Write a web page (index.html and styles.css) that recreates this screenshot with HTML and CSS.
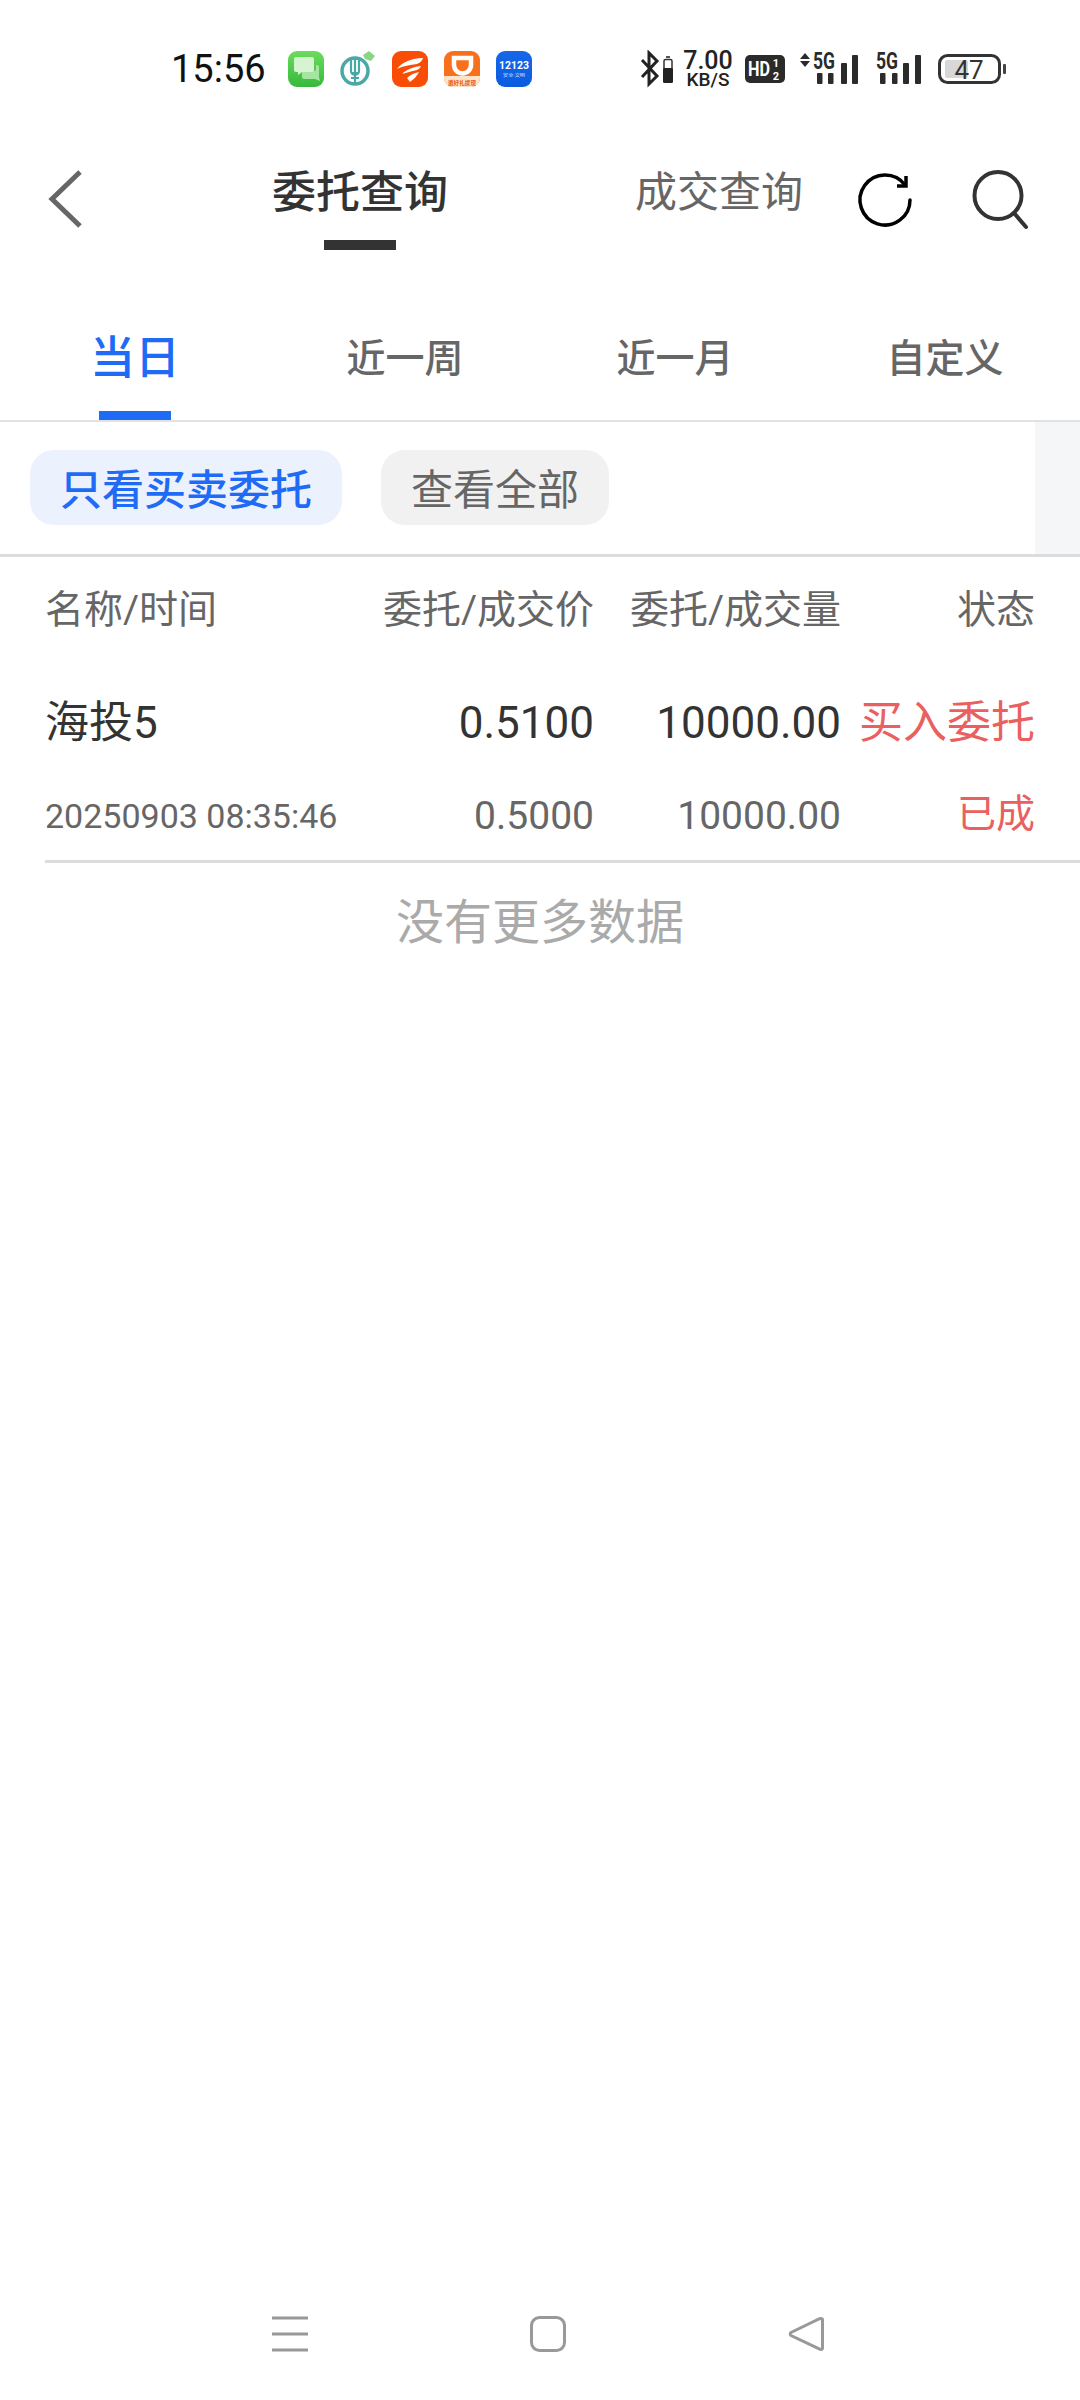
FILE: index.html
```html
<!DOCTYPE html>
<html lang="zh-CN">
<head>
    <meta charset="UTF-8">
    <meta name="viewport" content="width=device-width, initial-scale=1.0">
    <title>委托查询</title>
    <link rel="stylesheet" href="styles.css">
</head>
<body>
    <div class="status-bar">
        <span class="clock">15:56</span>
        <div class="app-icons">
            <svg class="app-icon" viewBox="0 0 36 36">
                <defs>
                    <linearGradient id="msg-bg" x1="0" y1="0" x2="0" y2="1">
                        <stop offset="0" stop-color="#6bdc5e"/>
                        <stop offset="1" stop-color="#37b83c"/>
                    </linearGradient>
                </defs>
                <rect width="36" height="36" rx="9" fill="url(#msg-bg)"/>
                <path d="M14 20h12a2 2 0 0 0 2-2v-4h1a2 2 0 0 1 2 2v10l1 4-5-2H16a2 2 0 0 1-2-2z" fill="#a4e5a0"/>
                <path d="M8 6h16a2 2 0 0 1 2 2v11a2 2 0 0 1-2 2H14l-4 3v-3H8a2 2 0 0 1-2-2V8a2 2 0 0 1 2-2z" fill="#d5f4d0"/>
            </svg>
            <svg class="app-icon" viewBox="0 0 36 36">
                <circle cx="15" cy="20" r="13" fill="none" stroke="#4aa9a5" stroke-width="3.500"/>
                <path d="M11 7v13a4 4 0 0 0 8 0V7M15 6v28M11 22h8M11 27h8" fill="none" stroke="#4aa9a5" stroke-width="2.200"/>
                <path d="M23 4l6-4 6 5-4 5-6-2z" fill="#8ad685"/>
            </svg>
            <svg class="app-icon" viewBox="0 0 36 36">
                <rect width="36" height="36" rx="9" fill="#f94c05"/>
                <path d="M5 18C10 11 20 7 31 7c-1 3-3 5-6 6-7 1-14 2-20 5z" fill="#fff"/>
                <path d="M10 23c4-4 10-7 19-8-1 2-2 3-4 4-6 1-10 3-15 4z" fill="#fff"/>
                <path d="M15 27c3-3 7-5 12-6-2 4-5 7-9 10-1-1-2-3-3-4z" fill="#fff"/>
            </svg>
            <svg class="app-icon" viewBox="0 0 36 36">
                <rect width="36" height="36" rx="9" fill="#f9701c"/>
                <path d="M0 25h36v2a9 9 0 0 1-9 9H9a9 9 0 0 1-9-9z" fill="#fde3c8"/>
                <path d="M10 7h17v7a8.500 8.500 0 0 1-17 0z" fill="none" stroke="#fff" stroke-width="4.500"/>
                <text class="didi-text" x="18" y="33.500" text-anchor="middle" textLength="28" lengthAdjust="spacingAndGlyphs">邀好礼提现</text>
            </svg>
            <svg class="app-icon" viewBox="0 0 36 36">
                <defs>
                    <linearGradient id="traffic-bg" x1="0" y1="0" x2="0" y2="1">
                        <stop offset="0" stop-color="#1668e8"/>
                        <stop offset="1" stop-color="#0a5be0"/>
                    </linearGradient>
                </defs>
                <rect width="36" height="36" rx="9" fill="url(#traffic-bg)"/>
                <text class="traffic-num" x="18" y="18" text-anchor="middle" textLength="30" lengthAdjust="spacingAndGlyphs">12123</text>
                <text class="traffic-sub" x="18" y="26" text-anchor="middle" textLength="22" lengthAdjust="spacingAndGlyphs">安全·文明</text>
            </svg>
        </div>
        <div class="sys-icons">
            <svg class="sys-bt" viewBox="0 0 38 38">
                <path d="M4 10L19 26L11 34V3L19 11L4 27" fill="none" stroke="#222" stroke-width="3"/>
                <rect x="28" y="6" width="4" height="2" fill="#555"/>
                <rect x="26" y="9.500" width="8" height="22" rx="1.500" fill="none" stroke="#333" stroke-width="1.500"/>
                <rect x="25" y="18" width="10" height="15" rx="1.500" fill="#222"/>
            </svg>
            <div class="net-speed">
                <span class="net-value">7.00</span>
                <span class="net-unit">KB/S</span>
            </div>
            <svg class="sys-hd" viewBox="0 0 40 28">
                <rect width="40" height="28" rx="5" fill="#2b2b2b"/>
                <text class="hd-text" x="3" y="21" textLength="22" lengthAdjust="spacingAndGlyphs">HD</text>
                <text class="hd-small" x="31" y="12" text-anchor="middle">1</text>
                <text class="hd-small" x="31" y="25" text-anchor="middle">2</text>
            </svg>
            <svg class="sys-sig-a" viewBox="0 0 62 36">
                <path d="M2 8L7 2L12 8zM2 10L7 16L12 10z" fill="#2b2b2b"/>
                <text class="sig-text" x="15" y="18" textLength="22" lengthAdjust="spacingAndGlyphs">5G</text>
                <rect x="19" y="22" width="5.500" height="11" rx="1" fill="#2b2b2b"/>
                <rect x="30" y="22" width="5.500" height="11" rx="1" fill="#2b2b2b"/>
                <rect x="43" y="12" width="6" height="21" rx="1" fill="#2b2b2b"/>
                <rect x="54" y="4" width="6" height="29" rx="1" fill="#2b2b2b"/>
            </svg>
            <svg class="sys-sig-b" viewBox="0 0 48 36">
                <text class="sig-text" x="2" y="18" textLength="22" lengthAdjust="spacingAndGlyphs">5G</text>
                <rect x="6" y="22" width="5.500" height="11" rx="1" fill="#2b2b2b"/>
                <rect x="18" y="22" width="5.500" height="11" rx="1" fill="#2b2b2b"/>
                <rect x="29" y="12" width="6" height="21" rx="1" fill="#2b2b2b"/>
                <rect x="41" y="4" width="6" height="29" rx="1" fill="#2b2b2b"/>
            </svg>
            <svg class="sys-battery" viewBox="0 0 69 34">
                <rect x="1.500" y="3.500" width="60" height="27" rx="8" fill="#fff" stroke="#333" stroke-width="3"/>
                <rect x="7" y="8" width="23" height="18" rx="2" fill="#d8d8d8"/>
                <text class="battery-text" x="31" y="27" text-anchor="middle">47</text>
                <rect x="65" y="12" width="3" height="10" rx="1" fill="#444"/>
            </svg>
        </div>
    </div>

    <div class="nav">
        <svg class="nav-back" viewBox="0 0 40 66">
            <path d="M34 6L6 33L34 60" fill="none" stroke="#666" stroke-width="5"/>
        </svg>
        <div class="nav-tab">
            <span class="nav-title">委托查询</span>
            <span class="nav-mark"></span>
        </div>
        <span class="nav-other">成交查询</span>
        <svg class="nav-refresh" viewBox="0 0 60 60">
            <path d="M55 30A25 25 0 1 1 50 15" fill="none" stroke="#000" stroke-width="3.500" stroke-linecap="round"/>
            <path d="M42 16H51V6" fill="none" stroke="#000" stroke-width="3.500"/>
        </svg>
        <svg class="nav-search" viewBox="0 0 60 62">
            <circle cx="28" cy="27.500" r="23.500" fill="none" stroke="#333" stroke-width="4"/>
            <path d="M44 45L56 59" fill="none" stroke="#333" stroke-width="4" stroke-linecap="round"/>
        </svg>
    </div>

    <div class="period-tabs">
        <div class="period active"><span>当日</span><i></i></div>
        <div class="period"><span>近一周</span><i></i></div>
        <div class="period"><span>近一月</span><i></i></div>
        <div class="period"><span>自定义</span><i></i></div>
    </div>

    <div class="filter-row">
        <div class="chips">
            <span class="chip chip-on">只看买卖委托</span>
            <span class="chip">查看全部</span>
        </div>
        <div class="filter-side"></div>
    </div>

    <div class="table-head">
        <span>名称/时间</span>
        <span class="num">委托/成交价</span>
        <span class="num">委托/成交量</span>
        <span class="num">状态</span>
    </div>

    <div class="order">
        <span class="order-name">海投5</span>
        <span class="order-main num">0.5100</span>
        <span class="order-main num">10000.00</span>
        <span class="order-state num">买入委托</span>
        <span class="order-time">20250903 08:35:46</span>
        <span class="order-sub num">0.5000</span>
        <span class="order-sub num">10000.00</span>
        <span class="order-done num">已成</span>
    </div>

    <div class="no-more">没有更多数据</div>

    <div class="sys-nav">
        <svg viewBox="0 0 36 36">
            <path d="M0 2H36M0 18H36M0 34H36" fill="none" stroke="#999" stroke-width="3"/>
        </svg>
        <svg viewBox="0 0 36 36">
            <rect x="1.500" y="1.500" width="33" height="33" rx="8" fill="none" stroke="#999" stroke-width="3"/>
        </svg>
        <svg viewBox="0 0 36 36">
            <path d="M33 2.500a1.500 1.500 0 0 1 1.500 1.500v28a1.500 1.500 0 0 1-2.300 1.300L3 19.500a1.800 1.800 0 0 1 0-3L31.500 2.700z" fill="none" stroke="#999" stroke-width="3"/>
        </svg>
    </div>
</body>
</html>
```

FILE: styles.css
```css
* {
    box-sizing: border-box;
}

body {
    margin: 0;
    width: 1080px;
    height: 2400px;
    display: flex;
    flex-direction: column;
    background-color: #fff;
    font-family: Roboto, "Noto Sans CJK SC", sans-serif;
    color: #333;
}

svg {
    display: block;
    flex-shrink: 0;
}

/* status bar */
.status-bar {
    display: flex;
    align-items: center;
    height: 138px;
    padding-left: 171px;
}

.clock {
    width: 117px;
    font-size: 38px;
    color: #111;
}

.app-icons {
    display: flex;
    align-items: center;
    gap: 16px;
}

.app-icon {
    width: 36px;
    height: 36px;
}

.didi-text {
    font-size: 6px;
    font-weight: 700;
    fill: #e8591a;
}

.traffic-num {
    font-size: 11px;
    font-weight: 700;
    fill: #fff;
}

.traffic-sub {
    font-size: 4px;
    fill: #dbe8ff;
}

.sys-icons {
    display: flex;
    align-items: center;
    margin-left: 106px;
}

.sys-bt {
    width: 38px;
    height: 38px;
}

.net-speed {
    display: flex;
    flex-direction: column;
    align-items: center;
    width: 52px;
    margin-left: 6px;
    color: #222;
}

.net-value {
    font-size: 25px;
    font-weight: 500;
    line-height: 20px;
}

.net-unit {
    font-size: 19px;
    font-weight: 500;
    line-height: 17px;
}

.sys-hd {
    width: 40px;
    height: 28px;
    margin-left: 11px;
}

.hd-text {
    font-size: 21px;
    font-weight: 700;
    fill: #fff;
}

.hd-small {
    font-size: 11px;
    font-weight: 700;
    fill: #fff;
}

.sys-sig-a {
    width: 62px;
    height: 36px;
    margin-left: 13px;
    overflow: visible;
}

.sys-sig-b {
    width: 48px;
    height: 36px;
    margin-left: 14px;
    overflow: visible;
}

.sig-text {
    font-size: 23px;
    font-weight: 700;
    fill: #2b2b2b;
}

.sys-battery {
    width: 69px;
    height: 34px;
    margin-left: 16px;
}

.battery-text {
    font-size: 26px;
    fill: #333;
}

/* top navigation */
.nav {
    display: flex;
    align-items: flex-start;
    height: 112px;
    padding: 25px 0 0 46px;
}

.nav-back {
    width: 40px;
    height: 66px;
    margin-top: 3px;
}

.nav-tab {
    display: flex;
    flex-direction: column;
    align-items: center;
    width: 176px;
    margin-left: 186px;
}

.nav-title {
    font-size: 44px;
    font-weight: 500;
    line-height: 60px;
    color: #333;
}

.nav-mark {
    width: 72px;
    height: 10px;
    margin-top: 17px;
    background-color: #333;
}

.nav-other {
    width: 168px;
    margin-left: 187px;
    font-size: 42px;
    line-height: 60px;
    color: #666;
}

.nav-refresh {
    width: 60px;
    height: 60px;
    margin: 7px 0 0 52px;
}

.nav-search {
    width: 60px;
    height: 62px;
    margin: 5px 0 0 55px;
}

/* period tabs */
.period-tabs {
    display: grid;
    grid-template-columns: repeat(4, 270px);
    height: 172px;
    border-bottom: 2px solid #e2e2e2;
}

.period {
    display: flex;
    flex-direction: column;
    align-items: center;
    justify-content: flex-end;
    font-size: 39px;
    font-weight: 500;
    color: #666;
}

.period span {
    line-height: 56px;
}

.period i {
    width: 72px;
    height: 9px;
    margin-top: 24px;
}

.period.active {
    font-size: 45px;
    color: #1f6bf5;
}

.period.active i {
    background-color: #1f6bf5;
}

/* filter chips */
.filter-row {
    display: flex;
    justify-content: space-between;
    height: 135px;
    padding-left: 30px;
    border-bottom: 3px solid #dcdcdc;
}

.chips {
    display: flex;
    align-items: flex-start;
    gap: 39px;
    padding-top: 28px;
}

.chip {
    height: 75px;
    padding: 6px 30px 0;
    border-radius: 24px;
    font-size: 42px;
    line-height: 69px;
    color: #666;
    background-color: #f1f1f1;
}

.chip-on {
    font-weight: 500;
    color: #1f6bf5;
    background-color: #ebf2fd;
}

.filter-side {
    width: 45px;
    background-color: #f5f6f8;
}

/* order table */
.table-head,
.order {
    display: grid;
    grid-template-columns: 330px 219px 247px 194px;
    margin-left: 45px;
    padding-right: 45px;
}

.table-head {
    align-items: center;
    height: 104px;
    padding-bottom: 6px;
    font-size: 39px;
    color: #666;
}

.table-head span:first-child {
    white-space: nowrap;
}

.num {
    text-align: right;
    white-space: nowrap;
}

.order {
    grid-template-rows: 62px 62px;
    row-gap: 31px;
    height: 202px;
    padding-top: 31px;
    border-bottom: 3px solid #dcdcdc;
    align-items: center;
}

.order-name {
    padding-bottom: 8px;
    font-size: 44px;
    color: #333;
}

.order-main {
    font-size: 44px;
    color: #333;
}

.order-state {
    padding-bottom: 8px;
    font-size: 44px;
    color: #ea6060;
}

.order-time {
    font-size: 34px;
    color: #666;
    white-space: nowrap;
}

.order-sub {
    font-size: 39px;
    color: #666;
}

.order-done {
    padding-bottom: 12px;
    font-size: 39px;
    color: #ea6060;
}

.no-more {
    margin-top: 30px;
    font-size: 48px;
    line-height: 60px;
    text-align: center;
    color: #aaa;
}

/* system navigation bar */
.sys-nav {
    display: flex;
    align-items: center;
    justify-content: center;
    gap: 222px;
    height: 132px;
    margin-top: auto;
    padding-left: 16px;
}

.sys-nav svg {
    width: 36px;
    height: 36px;
}
```
